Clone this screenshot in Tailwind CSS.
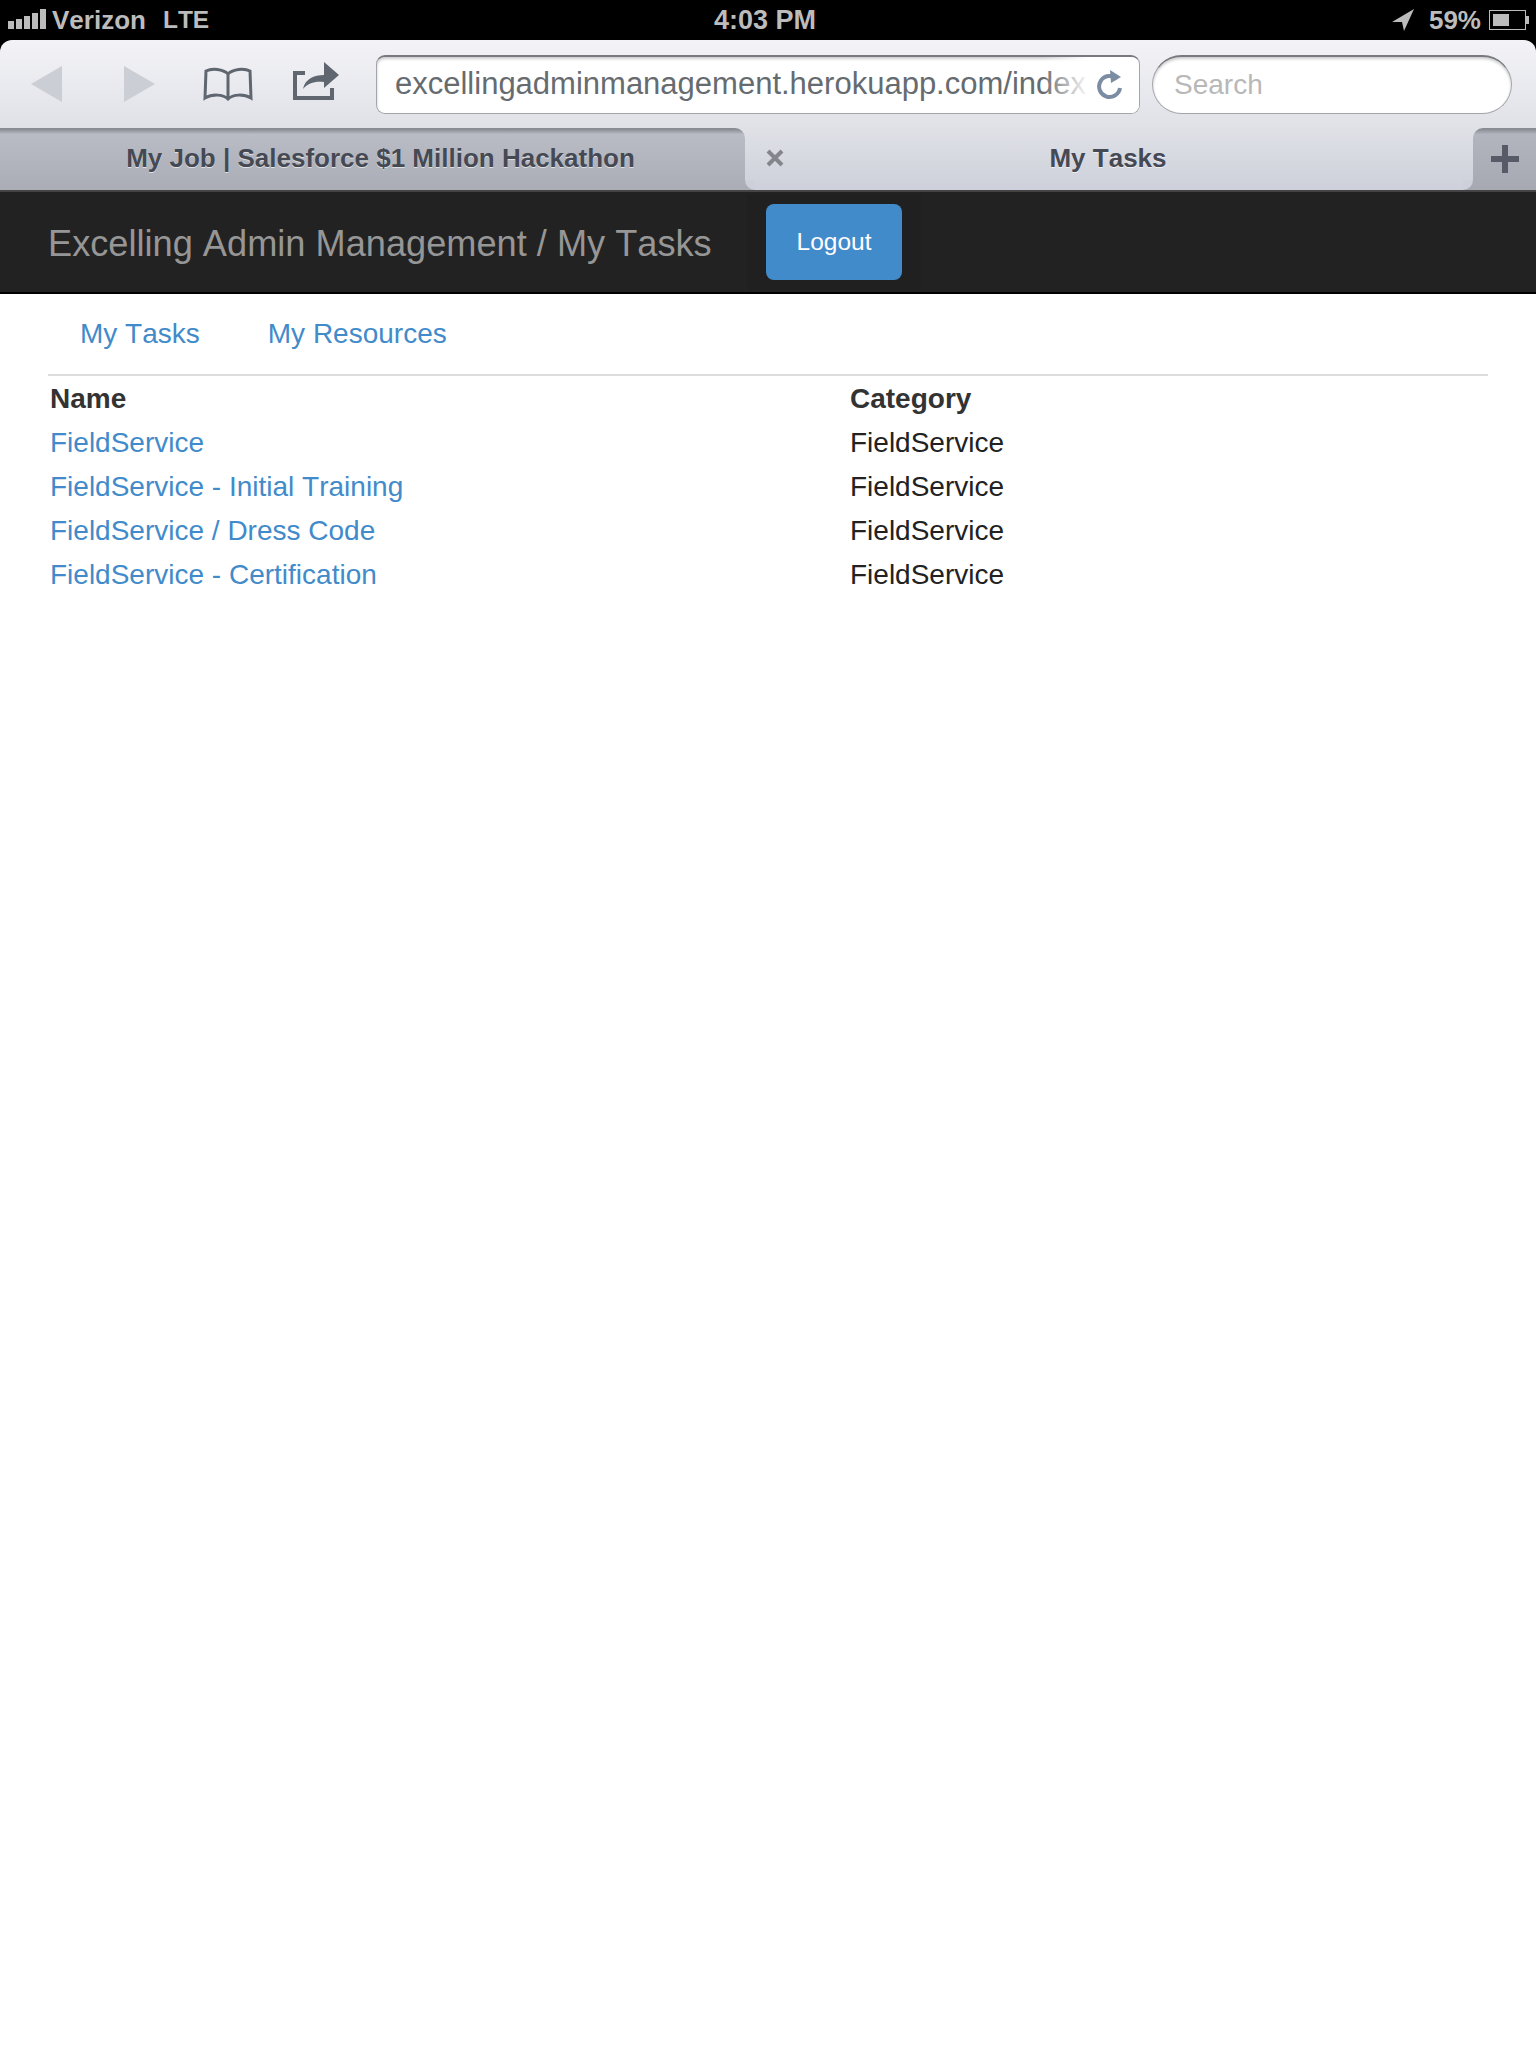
<!DOCTYPE html>
<html lang="en">
<head>
  <meta charset="UTF-8">
  <meta name="viewport" content="width=device-width, initial-scale=1.0">
  <title>My Tasks</title>
  <script src="https://cdn.jsdelivr.net/npm/@tailwindcss/browser@4"></script>
</head>
<body class="bg-white min-h-screen font-['Liberation_Sans',Arial,sans-serif] [font-kerning:none]">
  <!-- status bar -->
  <div class="h-[40px] bg-black text-[#bcbcbc] flex items-center relative">
    <div class="flex items-end gap-[2px] ml-[8px] h-[20px] mt-[-2px]">
      <span class="w-[6px] h-[8px] bg-[#bcbcbc]"></span>
      <span class="w-[6px] h-[10px] bg-[#bcbcbc]"></span>
      <span class="w-[6px] h-[13px] bg-[#bcbcbc]"></span>
      <span class="w-[6px] h-[16px] bg-[#bcbcbc]"></span>
      <span class="w-[6px] h-[20px] bg-[#bcbcbc]"></span>
    </div>
    <span class="ml-[6px] text-[26px] font-bold">Verizon</span>
    <span class="ml-[17px] text-[24.500px] font-bold">LTE</span>
    <span class="absolute left-[714px] top-[4px] text-[27px] leading-[32px] font-bold">4:03 PM</span>
    <div class="ml-auto flex items-center mr-[6px]">
      <svg width="24" height="24" viewBox="0 0 24 24" class="mr-[14px]"><path d="M23 1 L1 14 L11 14 L13 23 Z" fill="#bcbcbc"/></svg>
      <span class="text-[26px] font-bold mr-[8px]">59%</span>
      <div class="w-[37px] h-[20px] border-[1.500px] border-[#bcbcbc] p-[3px]"><div class="w-[16px] h-full bg-[#bcbcbc]"></div></div>
      <span class="w-[3px] h-[8px] bg-[#bcbcbc] mr-[1px]"></span>
    </div>
  </div>

  <!-- toolbar -->
  <div class="bg-black">
    <div class="h-[88px] rounded-t-[12px] bg-gradient-to-b from-[#f3f3f7] to-[#e0e1e7] flex items-center">
      <svg width="32" height="36" viewBox="0 0 32 36" class="ml-[31px]"><path d="M31 0 L31 36 L0 18 Z" fill="#cbced4"/></svg>
      <svg width="32" height="36" viewBox="0 0 32 36" class="ml-[60px]"><path d="M1 0 L1 36 L32 18 Z" fill="#cbced4"/></svg>
      <svg width="50" height="34" viewBox="0 0 50 34" class="ml-[48px]" fill="none" stroke="#5f6670" stroke-width="3"><path d="M25 7 C20 2 9 1 3 4 L2 31 C9 27 20 27 25 32 C30 27 41 27 48 31 L47 4 C41 1 30 2 25 7 Z M25 7 L25 32"/></svg>
      <svg width="48" height="38" viewBox="0 0 48 38" class="ml-[40px] mt-[-7px]"><path d="M12 11 L2 11 L2 36 L39 36 L39 26" fill="none" stroke="#5f6670" stroke-width="4"/><path d="M10 27 C12 17 21 13 31 13 L31 0 L46 13 L31 26 L31 20 C22 19 15 21 10 27 Z" fill="#5f6670"/></svg>
      <!-- address -->
      <div class="ml-[35px] relative w-[764px] h-[59px] rounded-[9px] border border-[#a3a5aa] border-t-2 border-t-[#77797e] bg-white shadow-[inset_0_2px_3px_rgba(0,0,0,0.2)] pl-[18px] flex items-center overflow-hidden">
        <span class="text-[31px] text-[#666b70] whitespace-nowrap">excellingadminmanagement.herokuapp.com/index.h</span>
        <div class="absolute right-0 top-0 bottom-0 w-[96px] bg-gradient-to-r from-white/0 via-white via-[48%] to-white"></div>
        <svg width="28" height="30" viewBox="0 0 28 30" class="absolute right-[15px] top-[13px]" fill="none"><path d="M21 9 A10.500 10.500 0 1 0 24 18" stroke="#7b8ca3" stroke-width="4"/><path d="M14 0 L25 7 L15 13 Z" fill="#7b8ca3"/></svg>
      </div>
      <!-- search -->
      <div class="ml-[12px] w-[360px] h-[59px] rounded-full border border-[#a3a5aa] border-t-2 border-t-[#77797e] bg-white shadow-[inset_0_2px_3px_rgba(0,0,0,0.2)] pl-[21px] flex items-center">
        <span class="text-[28px] text-[#b8b8b8]">Search</span>
      </div>
    </div>
  </div>

  <!-- tabs -->
  <div class="h-[62px] flex bg-gradient-to-b from-[#e0e1e7] to-[#cdd0da] text-[#454954] font-bold text-[26px] [text-shadow:0_1px_0_rgba(255,255,255,0.6)]">
    <div class="w-[745px] rounded-tr-[10px] bg-gradient-to-b from-[#8a8c93] from-[2%] via-[#b9bcc5] via-[10%] to-[#aaadb6] flex items-center justify-center pl-[16px] pb-[2px]">
      <span>My Job | Salesforce $1 Million Hackathon</span>
    </div>
    <div class="flex-1 relative flex items-center justify-center pb-[2px]">
      <div class="absolute left-0 bottom-0 size-[10px] bg-[#aaadb6]"><div class="size-full rounded-bl-[10px] bg-[#cdd0da]"></div></div>
      <div class="absolute right-0 bottom-0 size-[10px] bg-[#a6a9b2]"><div class="size-full rounded-br-[10px] bg-[#cdd0da]"></div></div>
      <svg width="18" height="18" viewBox="0 0 18 18" class="absolute left-[21px] top-[21px]"><path d="M2 2 L16 16 M16 2 L2 16" stroke="#84868c" stroke-width="4"/></svg>
      <span class="ml-[-2px]">My Tasks</span>
    </div>
    <div class="w-[63px] rounded-tl-[10px] bg-gradient-to-b from-[#8a8c93] from-[2%] via-[#b3b5be] via-[10%] to-[#a6a9b2] flex items-center justify-center">
      <svg width="28" height="28" viewBox="0 0 28 28"><path d="M14 0 L14 28 M0 14 L28 14" stroke="#565b67" stroke-width="6"/></svg>
    </div>
  </div>

  <!-- navbar -->
  <div class="h-[104px] bg-[#222222] border-t-2 border-t-[#444444] border-b-2 border-b-black flex items-center">
    <span class="ml-[48px] pt-[4px] text-[36.200px] text-[#969696] whitespace-nowrap">Excelling Admin Management / My Tasks</span>
    <div class="absolute left-[747px] top-[194px] w-[174px] h-[96px] bg-[#202020] flex items-center justify-center">
      <button class="w-[136px] h-[76px] rounded-[8px] bg-[#428bca] text-white text-[24.500px]">Logout</button>
    </div>
  </div>

  <!-- page -->
  <div class="mx-[48px] text-[28px] leading-[44px]">
    <div class="h-[82px] border-b-2 border-b-[#dddddd] flex items-center text-[#428bca] pl-[32px]">
      <a href="#">My Tasks</a>
      <a href="#" class="ml-[68px]">My Resources</a>
    </div>
    <table class="w-[1440px] mt-[1px] table-fixed text-[#222222]">
      <tbody>
        <tr class="h-[44px] text-[#333333] font-bold">
          <th class="w-[800px] pl-[2px] text-left">Name</th>
          <th class="pl-[2px] text-left">Category</th>
        </tr>
        <tr class="h-[44px]"><td class="pl-[2px]"><a href="#" class="text-[#428bca]">FieldService</a></td><td class="pl-[2px]">FieldService</td></tr>
        <tr class="h-[44px]"><td class="pl-[2px]"><a href="#" class="text-[#428bca]">FieldService - Initial Training</a></td><td class="pl-[2px]">FieldService</td></tr>
        <tr class="h-[44px]"><td class="pl-[2px]"><a href="#" class="text-[#428bca]">FieldService / Dress Code</a></td><td class="pl-[2px]">FieldService</td></tr>
        <tr class="h-[44px]"><td class="pl-[2px]"><a href="#" class="text-[#428bca]">FieldService - Certification</a></td><td class="pl-[2px]">FieldService</td></tr>
      </tbody>
    </table>
  </div>
</body>
</html>
